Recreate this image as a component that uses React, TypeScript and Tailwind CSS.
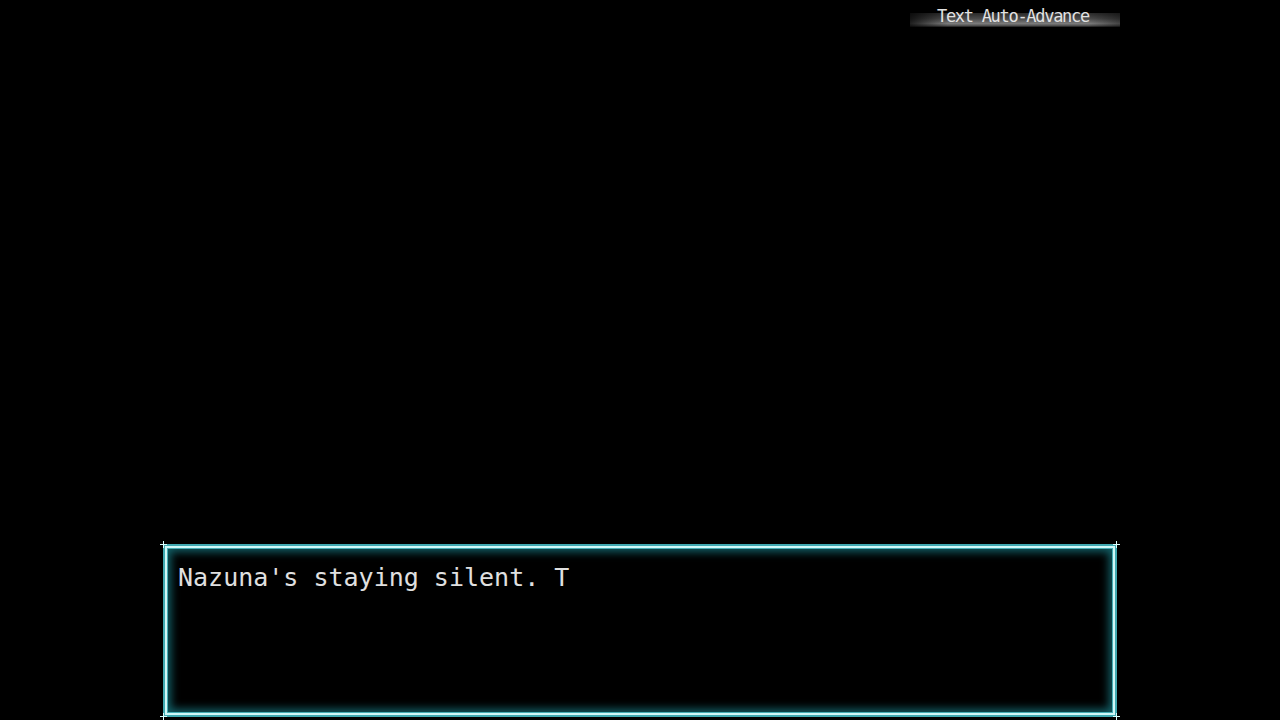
import React from 'react';

const mono = { fontFamily: '"DejaVu Sans Mono", "Liberation Mono", monospace' };

// small cross tick on each corner of the message window
const CornerTick = ({ className }: { className: string }) => (
  <div className={`absolute h-[7px] w-[7px] ${className}`}>
    <div className="absolute left-[3px] top-0 h-[7px] w-px bg-[#d8ffff]" />
    <div className="absolute left-0 top-[3px] h-px w-[7px] bg-[#d8ffff]" />
  </div>
);

const AutoAdvanceBadge = () => (
  <div className="flex justify-end pr-[160px] pt-[13px]">
    <div className="relative h-[14px] w-[210px] bg-[linear-gradient(to_bottom,#2a2a2a_0%,#4a4a4a_40%,#7a7a7a_75%,#5a5a5a_88%,#1a1a1a_100%)]">
      <div className="absolute inset-0 bg-[linear-gradient(to_right,rgba(0,0,0,0.75)_0%,rgba(0,0,0,0)_18%,rgba(0,0,0,0)_85%,rgba(0,0,0,0.45)_100%)]" />
      <div
        className="relative -top-[7px] pl-[27px] text-[17px] font-medium leading-[20px] tracking-[-1.3px] text-[#e2e2e2]"
        style={mono}
      >
        Text Auto-Advance
      </div>
    </div>
  </div>
);

const MessageWindow = ({ text }: { text: string }) => (
  <div className="relative mx-[163px] mb-[3px] h-[173px]">
    <div className="h-full border-2 border-[#3fa9b1]">
      <div className="h-full border-2 border-[#cff8f8]">
        <div className="h-full border border-[#45adb5] bg-black shadow-[inset_0_0_8px_3px_#125f66]">
          <p
            className="pl-[10px] pt-[14px] text-[25px] leading-[30px] text-[#e0e0e0]"
            style={mono}
          >
            {text}
          </p>
        </div>
      </div>
    </div>
    <CornerTick className="-left-[3px] -top-[3px]" />
    <CornerTick className="-right-[3px] -top-[3px]" />
    <CornerTick className="-left-[3px] -bottom-[3px]" />
    <CornerTick className="-right-[3px] -bottom-[3px]" />
  </div>
);

export default function App() {
  return (
    <div className="flex h-[720px] w-[1280px] flex-col overflow-hidden bg-black">
      <AutoAdvanceBadge />
      <div className="flex-1" />
      <MessageWindow text="Nazuna's staying silent. T" />
    </div>
  );
}
